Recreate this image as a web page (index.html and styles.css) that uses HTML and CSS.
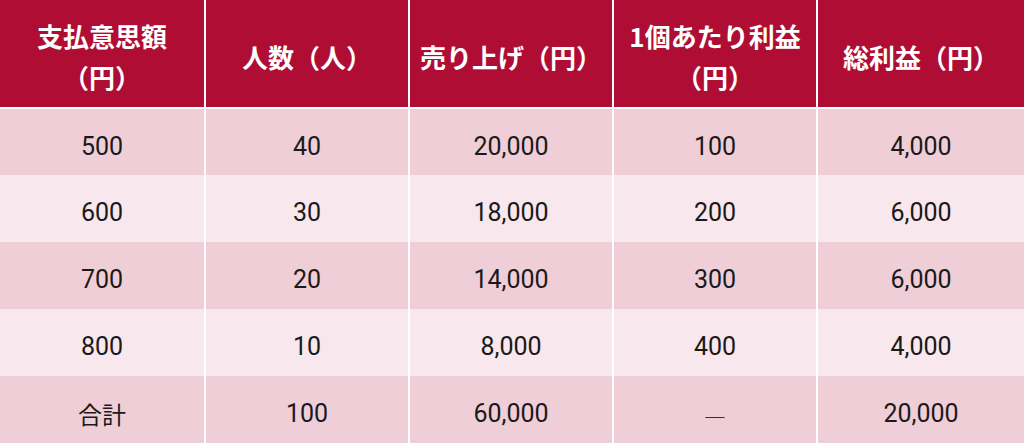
FILE: index.html
```html
<!DOCTYPE html>
<html lang="ja">
<head>
<meta charset="utf-8">
<link rel="stylesheet" href="styles.css">
</head>
<body>
<table class="profit">
  <colgroup>
    <col class="c1"><col class="c2"><col class="c3"><col class="c4"><col class="c5">
  </colgroup>
  <thead>
    <tr>
      <th>支払意思額<br>（円）</th>
      <th>人数（人）</th>
      <th>売り上げ（円）</th>
      <th>1個あたり利益<br>（円）</th>
      <th>総利益（円）</th>
    </tr>
  </thead>
  <tbody>
    <tr><td>500</td><td>40</td><td>20,000</td><td>100</td><td>4,000</td></tr>
    <tr><td>600</td><td>30</td><td>18,000</td><td>200</td><td>6,000</td></tr>
    <tr><td>700</td><td>20</td><td>14,000</td><td>300</td><td>6,000</td></tr>
    <tr><td>800</td><td>10</td><td>8,000</td><td>400</td><td>4,000</td></tr>
    <tr><td class="jp">合計</td><td>100</td><td>60,000</td><td class="jp dash">—</td><td>20,000</td></tr>
  </tbody>
</table>
</body>
</html>
```
FILE: styles.css
```css
html, body {
  margin: 0;
  padding: 0;
  background: #ffffff;
}
body {
  font-family: "Noto Sans CJK JP", "Noto Sans", sans-serif;
}
.profit {
  width: 1024px;
  border-collapse: collapse;
  table-layout: fixed;
}
.c1 { width: 205px; }
.c2 { width: 204px; }
.c3 { width: 204px; }
.c4 { width: 204px; }
.c5 { width: 207px; }
.profit th,
.profit td {
  text-align: center;
  vertical-align: middle;
  border-left: 2px solid #ffffff;
  border-right: 2px solid #ffffff;
  padding: 0;
  box-sizing: border-box;
}
.profit th:first-child,
.profit td:first-child { border-left: none; }
.profit th:last-child,
.profit td:last-child { border-right: none; }
.profit th {
  background: #b00d35;
  color: #ffffff;
  font-weight: 700;
  font-size: 26px;
  line-height: 41px;
  height: 108px;
  padding-top: 5px;
  border-bottom: 2px solid #ffffff;
}
.profit td {
  font-family: Roboto, "Noto Sans CJK JP", sans-serif;
  font-size: 25px;
  color: #1a1a1a;
  height: 67px;
  padding-top: 8px;
}
.profit tbody tr:nth-child(odd) td { background: #f0ced8; }
.profit tbody tr:nth-child(even) td { background: #f8e7ec; }
.profit td.jp {
  font-family: "Noto Sans CJK JP", sans-serif;
  font-size: 24px;
}
.profit td.dash {
  font-weight: 300;
  color: #333333;
}
```
